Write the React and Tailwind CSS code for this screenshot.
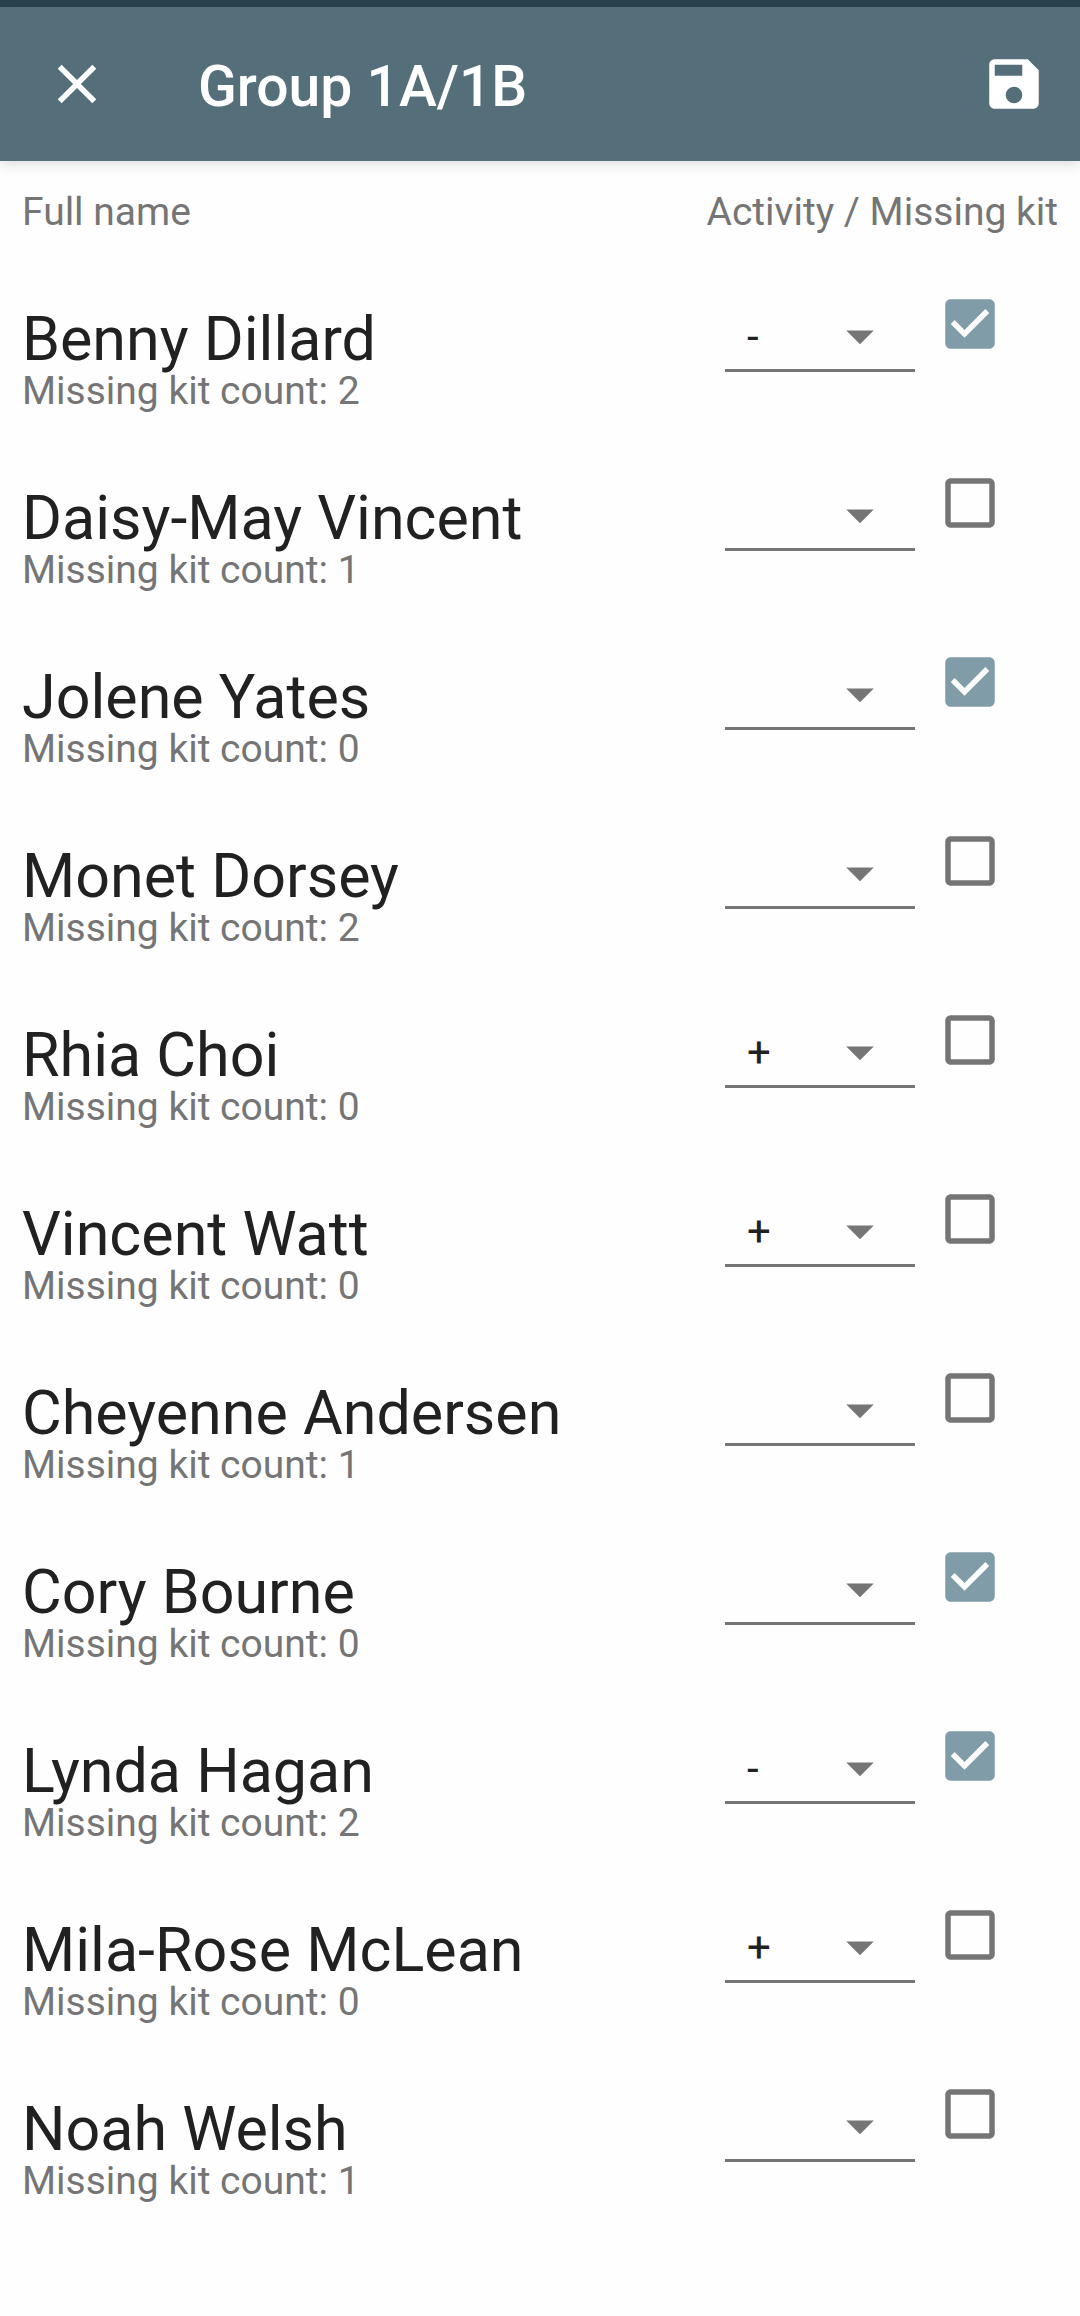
import { useState } from "react";

const members = [
  { name: "Benny Dillard", missing: 2, activity: "-", kit: true },
  { name: "Daisy-May Vincent", missing: 1, activity: "", kit: false },
  { name: "Jolene Yates", missing: 0, activity: "", kit: true },
  { name: "Monet Dorsey", missing: 2, activity: "", kit: false },
  { name: "Rhia Choi", missing: 0, activity: "+", kit: false },
  { name: "Vincent Watt", missing: 0, activity: "+", kit: false },
  { name: "Cheyenne Andersen", missing: 1, activity: "", kit: false },
  { name: "Cory Bourne", missing: 0, activity: "", kit: true },
  { name: "Lynda Hagan", missing: 2, activity: "-", kit: true },
  { name: "Mila-Rose McLean", missing: 0, activity: "+", kit: false },
  { name: "Noah Welsh", missing: 1, activity: "", kit: false },
];

function Icon({ d, className }) {
  return (
    <svg viewBox="0 0 24 24" fill="currentColor" aria-hidden="true" className={className}>
      <path d={d} />
    </svg>
  );
}

const CLOSE = "M19 6.41 17.59 5 12 10.59 6.41 5 5 6.41 10.59 12 5 17.59 6.41 19 12 13.41 17.59 19 19 17.59 13.41 12z";
const SAVE = "M17 3H5c-1.11 0-2 .9-2 2v14c0 1.1.89 2 2 2h14c1.1 0 2-.9 2-2V7l-4-4zm-5 16c-1.66 0-3-1.34-3-3s1.34-3 3-3 3 1.34 3 3-1.34 3-3 3zm3-10H5V5h10v4z";
const ARROW = "M7 10l5 5 5-5z";
const CHECKED = "M19 3H5c-1.11 0-2 .9-2 2v14c0 1.1.89 2 2 2h14c1.11 0 2-.9 2-2V5c0-1.1-.89-2-2-2zm-9 14l-5-5 1.41-1.41L10 14.17l7.59-7.59L19 8l-9 9z";
const UNCHECKED = "M19 5v14H5V5h14m0-2H5c-1.1 0-2 .9-2 2v14c0 1.1.9 2 2 2h14c1.1 0 2-.9 2-2V5c0-1.1-.9-2-2-2z";

function ActivitySelect({ name, value }) {
  const [activity, setActivity] = useState(value);
  return (
    <div className="mt-3 grid w-[190px] items-start">
      <select
        aria-label={`Activity for ${name}`}
        value={activity}
        onChange={(e) => setActivity(e.target.value)}
        className="col-start-1 row-start-1 h-[69px] w-full appearance-none rounded-none border-b-[3px] border-[#757575] bg-transparent pt-[2px] pl-[22px] text-[42px] leading-[64px] text-[#212121] outline-none"
      >
        <option value=""></option>
        <option value="+">+</option>
        <option value="-">-</option>
      </select>
      <Icon
        d={ARROW}
        className="pointer-events-none col-start-1 row-start-1 mr-[22px] size-[66px] justify-self-end text-[#757575]"
      />
    </div>
  );
}

function KitCheckbox({ name, defaultChecked }) {
  const [checked, setChecked] = useState(defaultChecked);
  return (
    <label className="grid size-[66px] cursor-pointer">
      <input
        type="checkbox"
        aria-label={`Missing kit for ${name}`}
        checked={checked}
        onChange={(e) => setChecked(e.target.checked)}
        className="col-start-1 row-start-1 size-full appearance-none"
      />
      <Icon
        d={checked ? CHECKED : UNCHECKED}
        className={
          checked
            ? "pointer-events-none col-start-1 row-start-1 size-full text-[#819ca9]"
            : "pointer-events-none col-start-1 row-start-1 size-full text-[#757575]"
        }
      />
    </label>
  );
}

export default function App() {
  return (
    <div className="min-h-screen bg-[#fefefe] font-[Roboto,sans-serif]">
      <div className="h-[7px] bg-[#29434e]" />
      <header className="flex h-[154px] items-center bg-[#546e7a] pr-[33px] text-white shadow-[0_3px_12px_rgba(0,0,0,0.14)]">
        <button type="button" aria-label="Close" className="flex w-[154px] justify-center">
          <Icon d={CLOSE} className="size-[66px]" />
        </button>
        <h1 className="ml-[44px] flex-1 pt-[6px] text-[57px] leading-[64px] font-medium">Group 1A/1B</h1>
        <button type="button" aria-label="Save">
          <Icon d={SAVE} className="size-[66px]" />
        </button>
      </header>
      <table className="w-full text-left">
        <thead>
          <tr className="h-[110px] align-top text-[39px] leading-[44px] text-[#757575]">
            <th className="pt-[29px] pl-[22px] font-normal">Full name</th>
            <th className="pt-[29px] pr-[22px] text-right font-normal">Activity / Missing kit</th>
          </tr>
        </thead>
        <tbody>
          {members.map((m) => (
            <tr key={m.name} className="h-[179px] align-top">
              <td className="pt-[38px] pl-[22px]">
                <p className="text-[61px] leading-[60px] text-[#212121]">{m.name}</p>
                <p className="text-[39px] leading-[44px] text-[#757575]">Missing kit count: {m.missing}</p>
              </td>
              <td className="pt-5 pr-[77px]">
                <div className="flex items-start justify-end gap-[22px]">
                  <ActivitySelect name={m.name} value={m.activity} />
                  <KitCheckbox name={m.name} defaultChecked={m.kit} />
                </div>
              </td>
            </tr>
          ))}
        </tbody>
      </table>
    </div>
  );
}
